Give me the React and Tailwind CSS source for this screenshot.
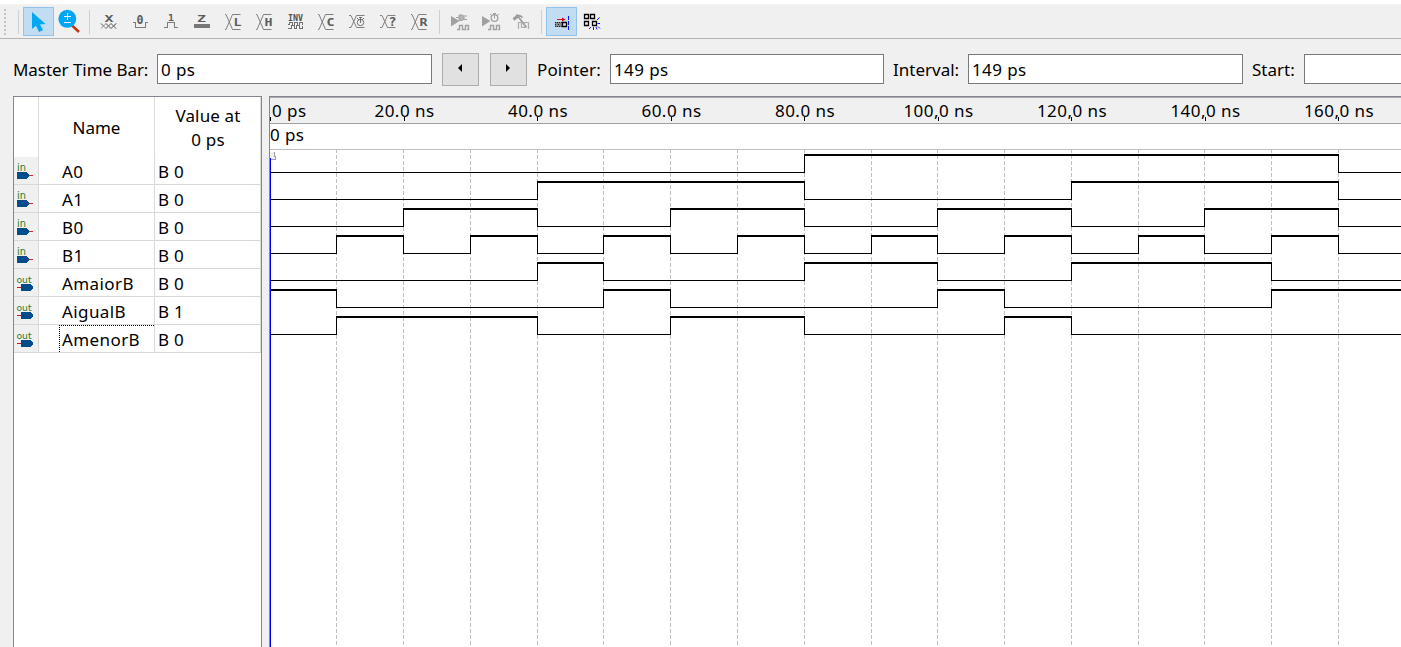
import React from 'react';

const LABEL = 'font-["Noto_Sans",sans-serif] text-[17px] leading-6 whitespace-pre text-black';

function Icon({ x, w = 31, active, children }) {
  return (
    <div className={active ? 'h-[29px] shrink-0 bg-[#c2dcf2] outline outline-1 -outline-offset-1 outline-[#90c3ee]' : 'h-[29px] shrink-0'}>
      <svg width={w} height="29" viewBox={`${x} 7 ${w} 29`} className="block" fill="none" shapeRendering="crispEdges">
        {children}
      </svg>
    </div>
  );
}

const Separator = () => <div className="mx-1 h-6 w-px shrink-0 bg-[#cfcfcf]" />;

function Glyph({ x, y, size = 11, w, children }) {
  return (
    <text x={x - w / 2} y={y} textLength={w} lengthAdjust="spacingAndGlyphs" fontSize={size} fontWeight="bold" fill="#5c5c5c"
      className='font-["DejaVu_Sans_Mono",monospace]'>
      {children}
    </text>
  );
}

function BusIcon({ x, letter, small }) {
  const l = x + 7;
  return (
    <Icon x={x}>
      {small ? (
        <path d={`M${l} 15.5h2l5.5 12h8M${l} 27.5h2l5.5-12h8`} stroke="#808080" shapeRendering="auto" />
      ) : (
        <path d={`M${l} 14.5h1l6.5 15h8M${l} 29.5h1l6.5-15h8`} stroke="#808080" shapeRendering="auto" />
      )}
      {letter && <Glyph x={x + 19.5} y={small ? 25.5 : 26} size={small ? 12 : 11} w={8}>{letter}</Glyph>}
      {!letter && (
        <g stroke="#707070" shapeRendering="auto">
          <circle cx={x + 18.5} cy="22.5" r="3.2" />
          <path d={`M${x + 18.5} 17v6M${x + 17} 17.5h3M${x + 15} 18l2 2M${x + 22} 18l-2 2`} />
        </g>
      )}
    </Icon>
  );
}

function Play({ x }) {
  return (
    <g>
      <path d={`M${x} 16l8.5 5-8.5 5.5z`} fill="#a1a1a1" shapeRendering="auto" />
      <path d={`M${x + 6} 29.5h2.5v-4h3v4h3v-4h3v4H${x + 16}`} stroke="#a1a1a1" strokeWidth="1.4" shapeRendering="auto" />
    </g>
  );
}

function Toolbar() {
  return (
    <header className="flex h-[39px] shrink-0 items-start border-b border-[#b4b4b4] bg-[#f0f0f0]">
      <div className="flex h-full w-full flex-col">
        <div className="h-1 shrink-0 bg-white" />
        <div className="h-px shrink-0 bg-[#f4f4f4]" />
        <div className="mt-[2px] flex h-[29px] items-center">
          <svg width="14" height="29" viewBox="0 7 14 29" className="shrink-0" fill="#c3c3c3" shapeRendering="crispEdges">
            {[9, 13, 17, 21, 25, 29, 33].map((y) => <rect key={y} x="4" y={y} width="2" height="2" />)}
          </svg>
          <Separator />
          <Icon x={23} active>
            <path d="M32 12v17l4-3.2 3 6.2 4-2-3-5.5 5.5-.5z" fill="#00a8f3" shapeRendering="auto" />
          </Icon>
          <Icon x={54}>
            <path d="M72 25.5l7 6.5" stroke="#c23b12" strokeWidth="2.6" shapeRendering="auto" />
            <circle cx="67.3" cy="18.8" r="9" fill="#00a8f3" shapeRendering="auto" />
            <path d="M64 16.5h7M67.5 13v7M64 22.5h7" stroke="#e8f7ff" />
          </Icon>
          <Separator />
          <Icon x={94}>
            <Glyph x={109} y={22} size={9.5} w={9}>X</Glyph>
            <path d="M101 23.5l5 5 5-5 5 5M101 28.5l5-5 5 5 5-5M106 23.5l5 5 5-5M106 28.5l5-5 5 5M101 23.5l2.5 2.5M114 26l2.5-2.5" stroke="#808080" strokeWidth=".9" shapeRendering="auto" />
          </Icon>
          <Icon x={125}>
            <path d="M133 22.5h2.5v5h10v-5h2.5" stroke="#7b7b7b" />
            <Glyph x={140} y={23.5} size={11.5} w={7}>0</Glyph>
          </Icon>
          <Icon x={156}>
            <path d="M164 27.5h3.5v-5h7v5h3.5" stroke="#7b7b7b" />
            <Glyph x={171} y={21} size={9} w={6}>1</Glyph>
          </Icon>
          <Icon x={187}>
            <path d="M194 24h16v4h-16z" fill="#777" />
            <Glyph x={201.5} y={22} size={9.5} w={9}>Z</Glyph>
          </Icon>
          <BusIcon x={218} letter="L" />
          <BusIcon x={249} letter="H" />
          <Icon x={280}>
            <text x="288" y="20.5" textLength="15" lengthAdjust="spacingAndGlyphs" fontSize="8.5" fontWeight="bold" fill="#505050" className='font-["DejaVu_Sans_Mono",monospace]'>INV</text>
            <path d="M288 24.5h1.5v-2h3v3h2v-3h3v3h2v-3h3v2M288 28.5h3.5v-3h3v3h2v-3h3v3h3v-3" stroke="#707070" />
          </Icon>
          <BusIcon x={311} letter="C" />
          <BusIcon x={342} small />
          <BusIcon x={373} letter="?" small />
          <BusIcon x={404} letter="R" />
          <Separator />
          <Icon x={444}>
            <Play x={451} />
            <path d="M456 17.5h3M459 15h2.5c3.5 0 3.5 5.5 0 5.5H459zM463 16h4M463 19.5h4" stroke="#a1a1a1" fill="#b5b5b5" shapeRendering="auto" />
          </Icon>
          <Icon x={475}>
            <Play x={482} />
            <g stroke="#a1a1a1" shapeRendering="auto"><circle cx="494.5" cy="18" r="3.3" strokeWidth="1.3" /><path d="M494.5 13v5.5M493 13.5h3M490 14l1.5 1.5M499 14l-1.5 1.5" /></g>
          </Icon>
          <Icon x={506}>
            <path d="M513.5 19.5l5-4" stroke="#9c9c9c" strokeWidth="3" shapeRendering="auto" />
            <path d="M516 15.5c3-.5 5 0 6.5 2M518.5 17l8 10.5" stroke="#9c9c9c" strokeWidth="1.8" shapeRendering="auto" />
            <path d="M518.5 29v-6.5h3v5h3v-5h4V29" stroke="#adadad" strokeWidth="1.2" shapeRendering="auto" />
          </Icon>
          <div className="flex w-[5px] shrink-0"><div className="ml-1 h-6 w-px bg-[#cfcfcf]" /></div>
          <div className="w-1 shrink-0" />
          <Icon x={546} active>
            <path d="M557 19.5h6" stroke="#d81818" />
            <path d="M562 17.5l3.5 2-3.5 2z" fill="#e00000" shapeRendering="auto" />
            <path d="M568.5 16v14" stroke="#0018ff" strokeDasharray="4 1" />
            <path d="M555 22h7v5h-7z" fill="#888" />
            <path d="M555 22.5h7M555 26.5h7M555.5 24v2M558.5 24v2" stroke="#222" strokeDasharray="1 1" />
            <path d="M562.5 22.5h4v4h-4z" stroke="#000" strokeWidth="1.3" fill="#dce9f5" shapeRendering="auto" />
          </Icon>
          <Icon x={577}>
            <path d="M584.5 14.5h4v4h-4zM590.5 14.5h4v4h-4zM584.5 21.5h4v4h-4zM592.5 21.5h4v4h-4z" stroke="#000" strokeWidth="1.3" shapeRendering="auto" />
            <path d="M597 20l2.5-2.5M597.5 23.5h2.5M598 26.5l2 2M593.5 27v3M591 27l-2 2M596 27l1 2.5" stroke="#1212ff" shapeRendering="auto" />
          </Icon>
        </div>
      </div>
    </header>
  );
}

function Field({ value, className }) {
  return <div className={`${LABEL} flex h-[30px] shrink-0 items-center border border-[#7a7a7a] bg-white pl-[3px] pt-[2px] tracking-[0.4px] ${className}`}>{value}</div>;
}

function StepButton({ d, className }) {
  return (
    <button className={`flex h-[33px] w-[37px] shrink-0 items-center justify-center border border-[#adadad] bg-[#e1e1e1] ${className}`}>
      <svg width="4" height="8" viewBox="0 0 4 8" className="-mt-[2px] mr-[2px]"><path d={d} /></svg>
    </button>
  );
}

function TimeBar() {
  return (
    <section className="flex h-[57px] shrink-0 items-center overflow-hidden pl-[13px] pt-[3px]">
      <div className={`${LABEL} w-[144px] shrink-0 pt-[2px] tracking-[-0.05px]`}>Master Time Bar:</div>
      <Field value="0 ps" className="w-[275px]" />
      <StepButton d="M4 0v8L0 4z" className="ml-[10px]" />
      <StepButton d="M0 0v8l4-4z" className="ml-[11px]" />
      <div className={`${LABEL} ml-[10px] w-[73px] shrink-0 pt-[2px] tracking-[0.15px]`}>Pointer:</div>
      <Field value="149 ps" className="w-[274px]" />
      <div className={`${LABEL} ml-[9px] w-[75px] shrink-0 pt-[2px]`}>Interval:</div>
      <Field value="149 ps" className="w-[275px]" />
      <div className={`${LABEL} ml-[9px] w-[52px] shrink-0 pt-[2px]`}>Start:</div>
      <Field value="" className="w-[275px]" />
    </section>
  );
}

// Each signal lists the 10 ns steps at which it toggles, starting from `start`.
const SIGNALS = [
  { name: 'A0', dir: 'in', start: 0, edges: [8, 16] },
  { name: 'A1', dir: 'in', start: 0, edges: [4, 8, 12, 16] },
  { name: 'B0', dir: 'in', start: 0, edges: [2, 4, 6, 8, 10, 12, 14, 16] },
  { name: 'B1', dir: 'in', start: 0, edges: [1, 2, 3, 4, 5, 6, 7, 8, 9, 10, 11, 12, 13, 14, 15, 16] },
  { name: 'AmaiorB', dir: 'out', start: 0, edges: [4, 5, 8, 10, 12, 15] },
  { name: 'AigualB', dir: 'out', start: 1, edges: [1, 5, 6, 10, 11, 15] },
  { name: 'AmenorB', dir: 'out', start: 0, edges: [1, 4, 6, 8, 11, 12] },
];

function PinIcon({ dir }) {
  return (
    <svg width="24" height="27" viewBox="0 0 24 27" shapeRendering="crispEdges" className="block">
      <text x={dir === 'in' ? 3 : 2.5} y="14" fontSize={dir === 'in' ? 10 : 9} textLength={dir === 'in' ? 9 : 15} lengthAdjust="spacingAndGlyphs" fill="#2c7a2c" className='font-["DejaVu_Sans",sans-serif]'>{dir}</text>
      {dir === 'in' ? (
        <>
          <path d="M14 18.5h5" stroke="#e3202a" />
          <path d="M3 15h9l3 3v1l-3 3H3z" fill="#004c8c" />
        </>
      ) : (
        <>
          <path d="M3 18.5h5" stroke="#b51f2a" />
          <path d="M7 15h9l3 3v1l-3 3H7z" fill="#004c8c" />
        </>
      )}
    </svg>
  );
}

function SignalTable() {
  return (
    <section className="flex w-[249px] shrink-0 flex-col border border-b-0 border-[#828790] bg-white">
      <div className="flex h-[60px] shrink-0">
        <div className="w-[25px] border-r border-[#dcdcdc]" />
        <div className={`${LABEL} flex w-[116px] items-center justify-center border-r border-[#dcdcdc] pt-[2px]`}>Name</div>
        <div className={`${LABEL} w-[106px] border-r border-[#dcdcdc] pl-px pt-[7px] text-center tracking-[0.15px]`}>Value at{'\n'}0 ps</div>
      </div>
      {SIGNALS.map((s) => (
        <div key={s.name} className="flex h-7 shrink-0">
          <div className="w-[25px] border-b border-r border-[#d8d8d8] bg-[#f0f0f0]"><PinIcon dir={s.dir} /></div>
          <div className="flex w-[116px] border-b border-r border-[#d8d8d8] pl-5">
            <div className={`${LABEL} w-full border-l border-t border-dotted pl-[2px] pt-[2px] tracking-[0.4px] ${s.name === 'AmenorB' ? 'border-black' : 'border-transparent'}`}>{s.name}</div>
          </div>
          <div className={`${LABEL} w-[106px] border-b border-r border-[#d8d8d8] pl-[3px] pt-[3px] tracking-[0.2px]`}>B {s.start}</div>
        </div>
      ))}
    </section>
  );
}

const stepX = (n) => Math.floor(n * 66.77 + 0.1);

function Wave({ signal, row }) {
  const low = 23 + row * 27;
  const high = low - 18;
  const stops = [0, ...signal.edges.map(stepX), 1140];
  return (
    <g>
      {stops.slice(0, -1).map((x, i) => {
        const on = (signal.start + i) % 2 === 1;
        return (
          <g key={x}>
            <rect x={x} y={on ? high : low} width={stops[i + 1] - x + 1} height={on ? 2 : 1} />
            {i > 0 && <rect x={x} y={high} width="1" height="19" />}
          </g>
        );
      })}
    </g>
  );
}

function WavePanel() {
  return (
    <section className="flex min-w-0 flex-1 flex-col overflow-hidden border-l border-t border-[#828790] bg-white">
      <div className="flex h-[27px] shrink-0 border-b border-t border-b-[#a0a0a0] border-t-[#a9a9a9] bg-[#f0f0f0]">
        {[0, 1, 2, 3, 4, 5, 6, 7, 8].map((n) => (
          <div key={n} className={`${LABEL} relative w-[133.5px] shrink-0 tracking-[0.45px]`}>
            <span className={n ? 'absolute left-[1px] top-px -translate-x-1/2' : 'absolute left-[2px] top-px'}>
              {n === 0 ? '0 ps' : n < 5 ? `${n * 20}.0 ns` : `${n * 20},0 ns`}
            </span>
            <span className="absolute left-0 top-[19px] h-1 w-px bg-black" />
          </div>
        ))}
      </div>
      <div className={`${LABEL} h-[25px] shrink-0 tracking-[0.4px]`}><span className="relative -top-px">0 ps</span></div>
      <svg width="1131" height="498" viewBox="0 0 1131 498" className="block shrink-0" shapeRendering="crispEdges">
        <rect width="1131" height="1" fill="#bdbdbd" />
        {Array.from({ length: 16 }, (_, i) => (
          <path key={i} d={`M${stepX(i + 1) + 0.5} 1V498`} stroke="#bfbfbf" strokeDasharray="4 2" strokeDashoffset="1" />
        ))}
        <path d="M0 3h4v4h1v3H0z" fill="#f0f0f0" />
        <path d="M4.5 3v4h1v3H0" fill="none" stroke="#a0a0a0" />
        {SIGNALS.map((s, i) => <Wave key={s.name} signal={s} row={i} />)}
        <rect y="9" width="1" height="489" fill="#0000ff" />
      </svg>
    </section>
  );
}

export default function App() {
  return (
    <main className="flex h-[647px] w-[1401px] flex-col overflow-hidden bg-[#f0f0f0]">
      <Toolbar />
      <TimeBar />
      <div className="flex min-h-0 flex-1 gap-[7px] pl-[13px]">
        <SignalTable />
        <WavePanel />
      </div>
    </main>
  );
}
